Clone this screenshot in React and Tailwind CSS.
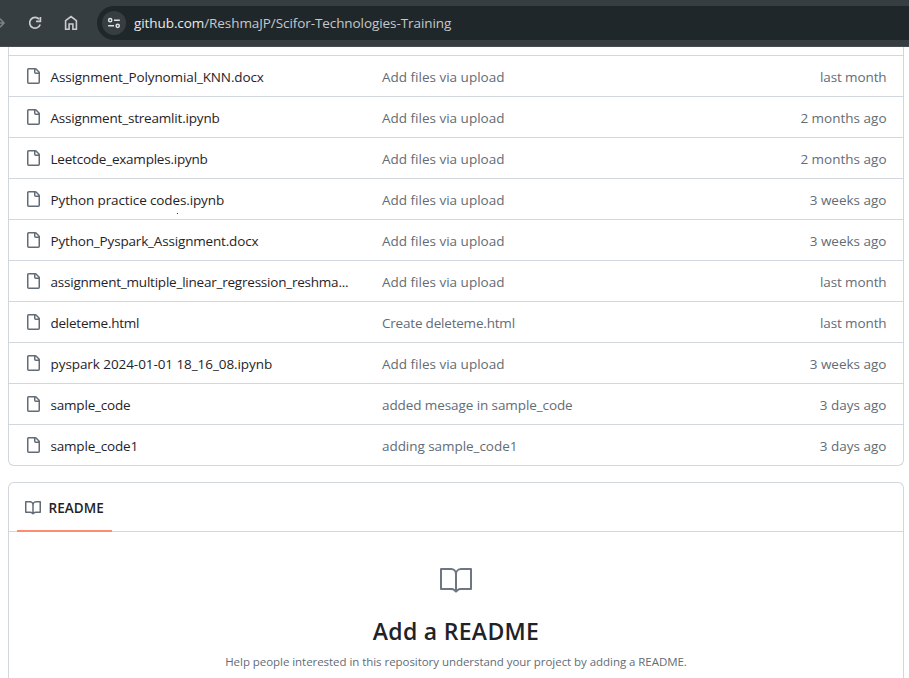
const files = [
  { name: "Assignment_Polynomial_KNN.docx", message: "Add files via upload", age: "last month", track: "tracking-[-0.13px]" },
  { name: "Assignment_streamlit.ipynb", message: "Add files via upload", age: "2 months ago", track: "tracking-[-0.19px]" },
  { name: "Leetcode_examples.ipynb", message: "Add files via upload", age: "2 months ago", track: "tracking-[-0.22px]" },
  { name: "Python practice codes.ipynb", message: "Add files via upload", age: "3 weeks ago", track: "tracking-[-0.12px]" },
  { name: "Python_Pyspark_Assignment.docx", message: "Add files via upload", age: "3 weeks ago", track: "tracking-[-0.17px]" },
  { name: "assignment_multiple_linear_regression_reshma...", message: "Add files via upload", age: "last month", track: "tracking-[-0.22px]" },
  { name: "deleteme.html", message: "Create deleteme.html", age: "last month", track: "tracking-[-0.24px]", messageTrack: "tracking-[-0.2px]" },
  { name: "pyspark 2024-01-01 18_16_08.ipynb", message: "Add files via upload", age: "3 weeks ago", track: "tracking-[-0.07px]" },
  { name: "sample_code", message: "added mesage in sample_code", age: "3 days ago", track: "tracking-[-0.19px]", messageTrack: "tracking-[-0.09px]" },
  { name: "sample_code1", message: "adding sample_code1", age: "3 days ago", track: "tracking-[-0.19px]", messageTrack: "tracking-[-0.05px]" },
];

function FileIcon() {
  return (
    <svg width="16" height="16" viewBox="0 0 16 16" fill="currentColor" className="shrink-0 text-[#636c76]">
      <path d="M2 1.75C2 .784 2.784 0 3.75 0h6.586c.464 0 .909.184 1.237.513l2.914 2.914c.329.328.513.773.513 1.237v9.586A1.75 1.75 0 0 1 13.25 16h-9.5A1.75 1.75 0 0 1 2 14.25Zm1.75-.25a.25.25 0 0 0-.25.25v12.5c0 .138.112.25.25.25h9.5a.25.25 0 0 0 .25-.25V6h-2.75A1.75 1.75 0 0 1 9 4.25V1.5Zm6.75.062V4.25c0 .138.112.25.25.25h2.688l-.011-.013-2.914-2.914-.013-.011Z" />
    </svg>
  );
}

function BookIcon() {
  return (
    <svg width="16" height="16" viewBox="0 0 16 16" fill="currentColor" className="shrink-0 text-[#636c76]">
      <path d="M0 1.75A.75.75 0 0 1 .75 1h4.253c1.227 0 2.317.59 3 1.501A3.743 3.743 0 0 1 11.006 1h4.245a.75.75 0 0 1 .75.75v10.5a.75.75 0 0 1-.75.75h-4.507a2.25 2.25 0 0 0-1.591.659l-.622.621a.75.75 0 0 1-1.06 0l-.622-.621A2.25 2.25 0 0 0 5.258 13H.75a.75.75 0 0 1-.75-.75Zm7.251 10.324.004-5.073-.002-2.253A2.25 2.25 0 0 0 5.003 2.5H1.5v9h3.757a3.75 3.75 0 0 1 1.994.574ZM8.755 4.75l-.004 7.322a3.752 3.752 0 0 1 1.992-.572H14.5v-9h-3.495a2.25 2.25 0 0 0-2.25 2.25Z" />
    </svg>
  );
}

function LargeBookIcon() {
  return (
    <svg width="32" height="32" viewBox="0 0 24 24" fill="currentColor" className="text-[#6e7781]">
      <path d="M0 3.75A.75.75 0 0 1 .75 3h7.497c1.566 0 2.945.8 3.751 2.014A4.495 4.495 0 0 1 15.75 3h7.5a.75.75 0 0 1 .75.75v15.063a.752.752 0 0 1-.755.75l-7.682-.052a3 3 0 0 0-2.142.878l-.89.891a.75.75 0 0 1-1.061 0l-.902-.901a2.996 2.996 0 0 0-2.121-.879H.75a.75.75 0 0 1-.75-.75Zm12.75 15.232a4.503 4.503 0 0 1 2.823-.971l6.927.047V4.5h-6.75a3 3 0 0 0-3 3ZM11.247 7.497a3 3 0 0 0-3-2.997H1.5V18h6.947c1.018 0 2.006.346 2.803.98Z" />
    </svg>
  );
}

function BrowserBar() {
  return (
    <header className="flex h-[47px] items-center border-b border-[#484c4e] bg-[#373e41]">
      <svg width="97" height="46" viewBox="0 0 97 46" fill="none" className="shrink-0">
        <path d="M-4 23H3M0 18.8L4 23L0 27.2" stroke="#7c8184" strokeWidth="1.6" />
        <path d="M39.2 19.3A5.4 5.4 0 1 0 40.2 24.5" stroke="#c9cdcf" strokeWidth="1.7" />
        <path d="M40.4 17V21.3H36" stroke="#c9cdcf" strokeWidth="1.7" />
        <path d="M65.6 29.2V20.6L71 16.6L76.4 20.6V29.2H72.9V24H69.1V29.2Z" stroke="#c9cdcf" strokeWidth="1.6" />
      </svg>
      <div className="flex h-[34px] flex-1 items-center rounded-l-full bg-[#20272a] pl-[5px]">
        <div className="flex size-6 items-center justify-center rounded-full bg-[#373e41]">
          <svg width="14" height="14" viewBox="0 0 14 14" fill="none" stroke="#dfe2e3" strokeWidth="1.5">
            <circle cx="3.2" cy="4.2" r="1.6" />
            <path d="M7 4.2H12.8M1.2 9.8H7" />
            <circle cx="10.7" cy="9.8" r="1.6" />
          </svg>
        </div>
        <span className="ml-2 whitespace-nowrap pt-px text-[13.5px] tracking-[-0.08px] text-[#c4c9cb]">
          <span className="text-[#e6e9ea]">github.com</span>/ReshmaJP/Scifor-Technologies-Training
        </span>
      </div>
    </header>
  );
}

export default function App() {
  return (
    <div className="h-[678px] w-[909px] overflow-hidden bg-white font-['Open_Sans','Noto_Sans',sans-serif] text-[13.5px] text-[#1f2328]">
      <BrowserBar />
      <main className="pl-2 pr-[5px]">
        <section className="rounded-b-md border border-t-0 border-[#d0d7de] pt-2">
          {files.map((file) => (
            <div key={file.name} className="flex h-[41px] items-center whitespace-nowrap border-t border-[#d0d7de] pl-4 pr-[16.5px]">
              <FileIcon />
              <span className={`ml-[9.5px] w-[331.5px] pt-[3px] ${file.track}`}>{file.name}</span>
              <span className={`relative flex-1 pt-[3px] text-[#636c76] ${file.messageTrack ?? "tracking-normal"}`}>
                {file.message}
                {file.name === "Python practice codes.ipynb" && (
                  <i className="absolute -left-[205px] top-[26px] size-px bg-[#1616e0]" />
                )}
              </span>
              <span className={`pt-[3px] text-[#636c76] ${file.age === "last month" ? "tracking-[-0.12px]" : "tracking-normal"}`}>{file.age}</span>
            </div>
          ))}
        </section>
        <section className="mt-4 h-[210px] rounded-t-md border border-b-0 border-[#d0d7de]">
          <div className="flex h-[49px] border-b border-[#d0d7de] pl-2">
            <div className="flex h-[49px] w-[95px] items-center gap-[7.5px] border-b-2 border-[#fd8c73] pl-2 pt-[3px]">
              <BookIcon />
              <span className="text-[13.5px] font-semibold tracking-[0.08px]">README</span>
            </div>
          </div>
          <div className="flex flex-col items-center pt-8">
            <LargeBookIcon />
            <h2 className="mt-[19px] whitespace-nowrap text-[23px] font-semibold leading-[32px] tracking-[0.3px]">Add a README</h2>
            <p className="mt-[6px] whitespace-nowrap text-[11.5px] leading-[18px] tracking-[-0.05px] text-[#636c76]">
              Help people interested in this repository understand your project by adding a README.
            </p>
          </div>
        </section>
      </main>
    </div>
  );
}
